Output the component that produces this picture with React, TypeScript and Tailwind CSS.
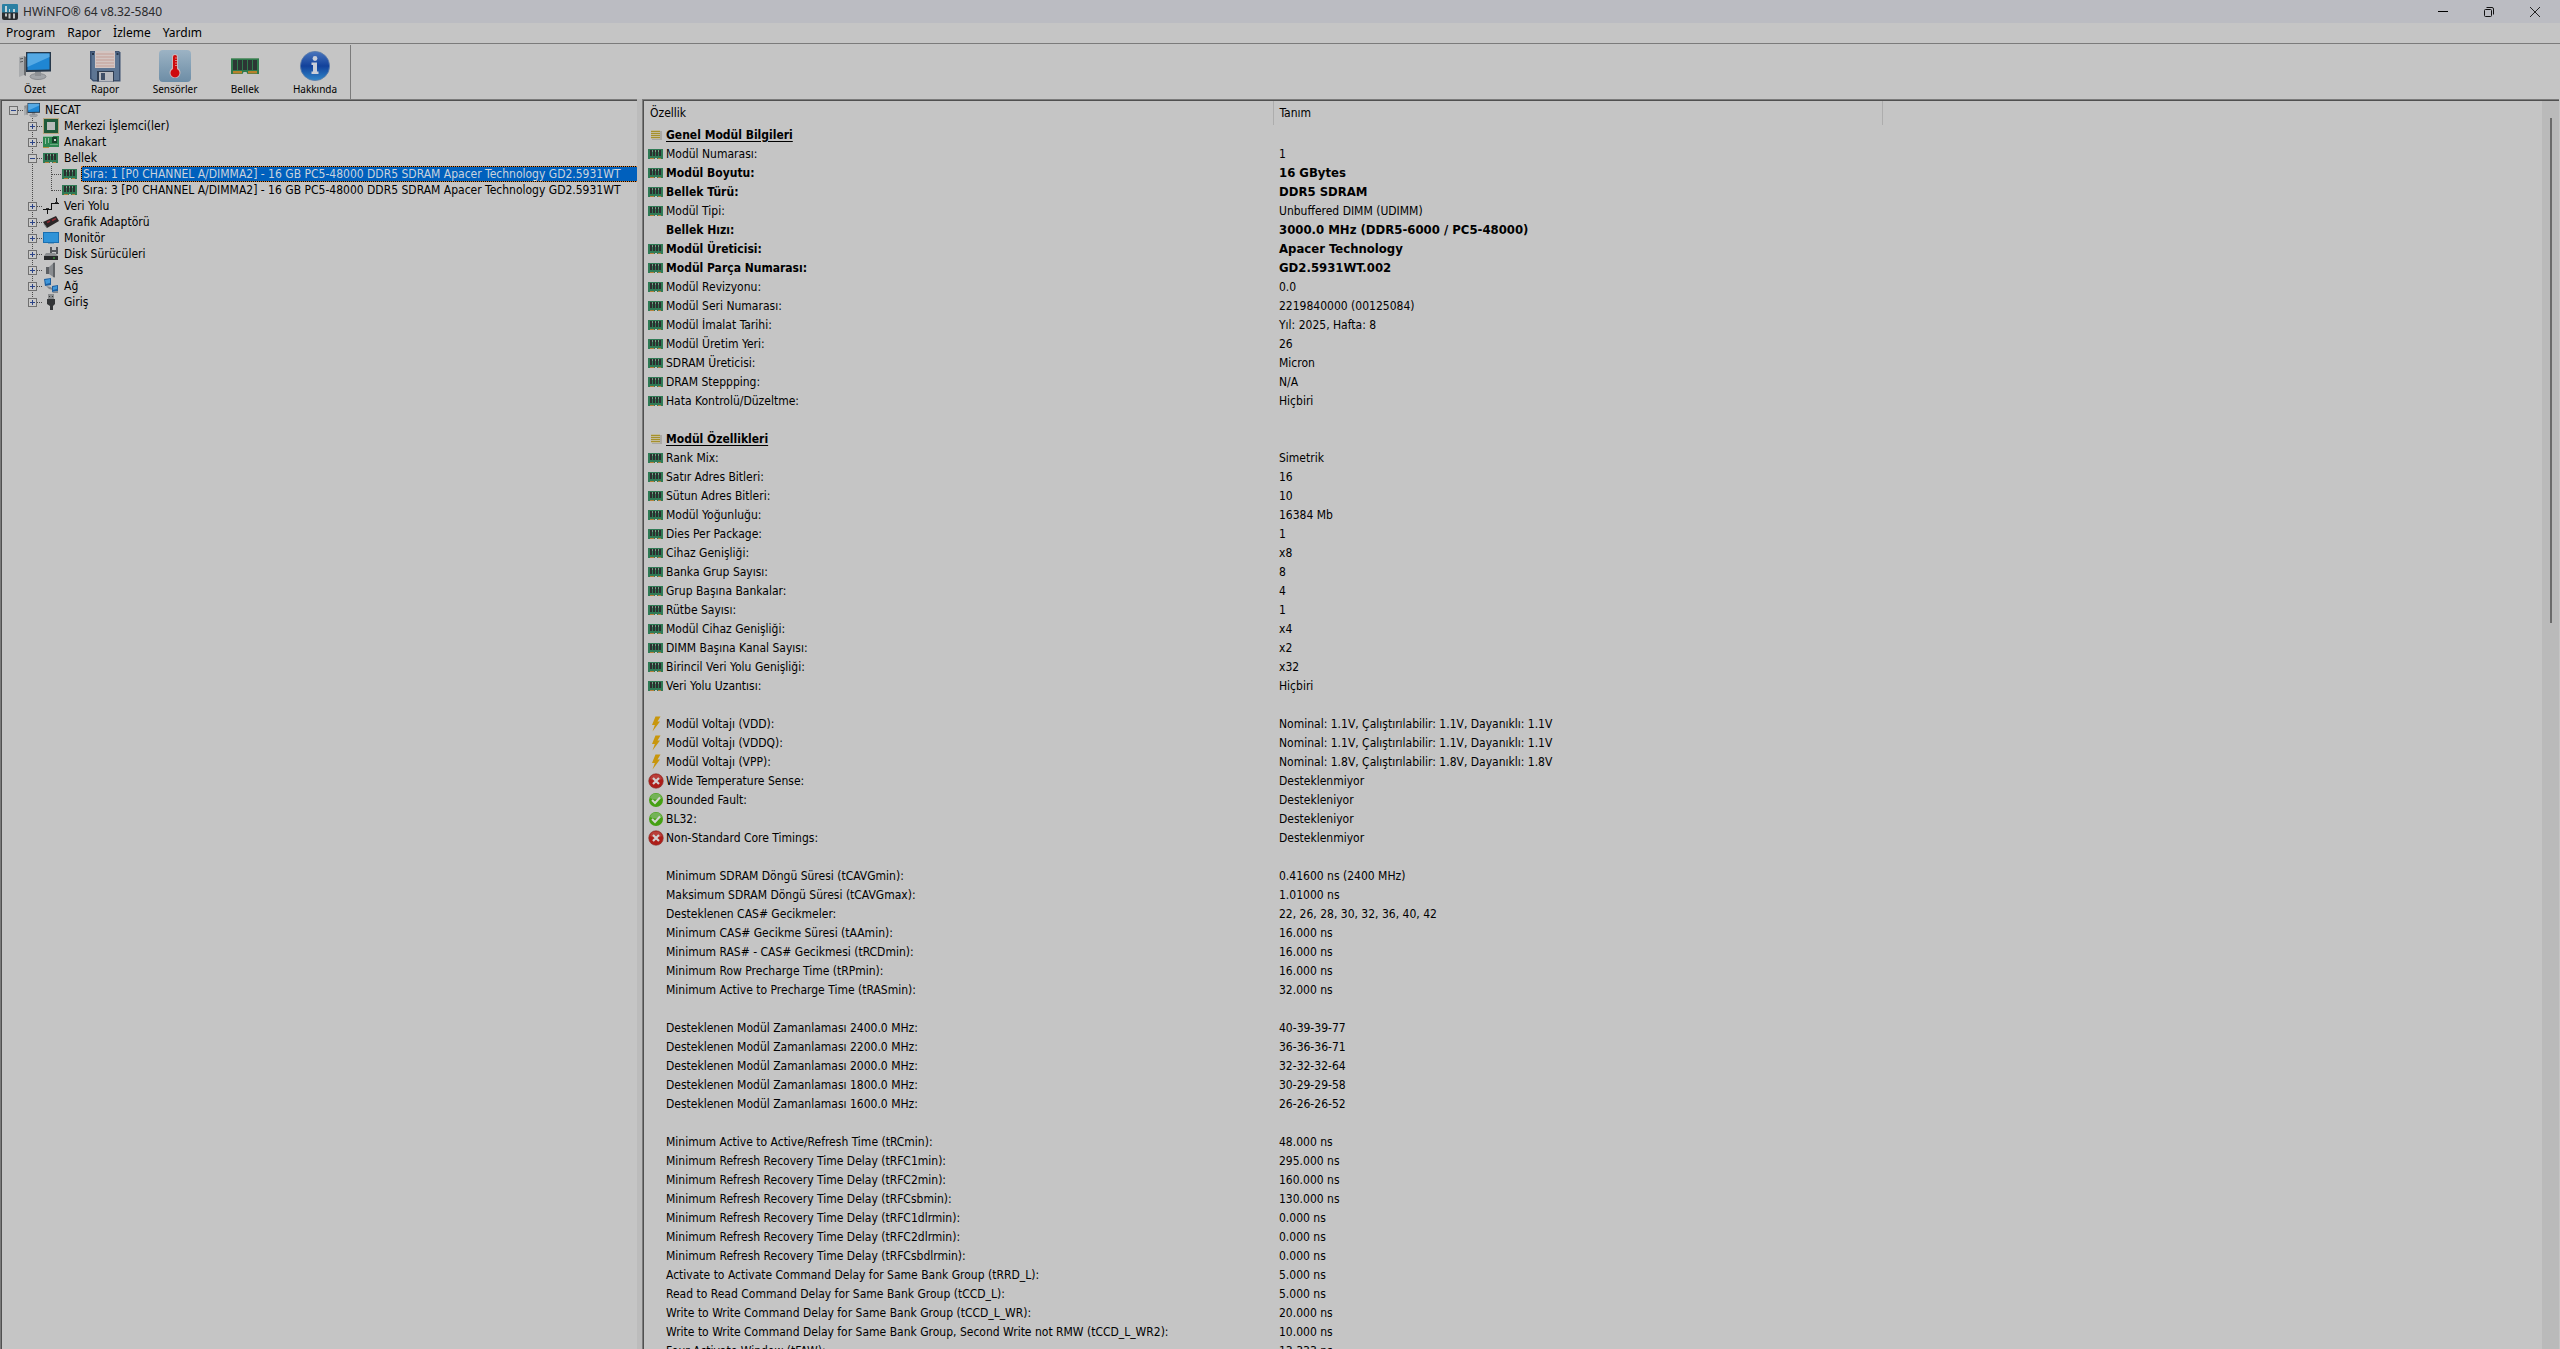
import React from "react";

type IconName = "none" | "ram" | "group" | "bolt" | "no" | "yes";

interface DetailRow {
    name?: string;
    value?: string;
    icon?: IconName;
    bold?: boolean;
    heading?: boolean;
}

const row = (icon: IconName, name: string, value: string, bold = false): DetailRow => ({ icon, name, value, bold });
const heading = (name: string): DetailRow => ({ icon: "group", name, heading: true });
const blank: DetailRow = {};

const details: DetailRow[] = [
    heading("Genel Modül Bilgileri"),
    row("ram", "Modül Numarası:", "1"),
    row("ram", "Modül Boyutu:", "16 GBytes", true),
    row("ram", "Bellek Türü:", "DDR5 SDRAM", true),
    row("ram", "Modül Tipi:", "Unbuffered DIMM (UDIMM)"),
    row("none", "Bellek Hızı:", "3000.0 MHz (DDR5-6000 / PC5-48000)", true),
    row("ram", "Modül Üreticisi:", "Apacer Technology", true),
    row("ram", "Modül Parça Numarası:", "GD2.5931WT.002", true),
    row("ram", "Modül Revizyonu:", "0.0"),
    row("ram", "Modül Seri Numarası:", "2219840000 (00125084)"),
    row("ram", "Modül İmalat Tarihi:", "Yıl: 2025, Hafta: 8"),
    row("ram", "Modül Üretim Yeri:", "26"),
    row("ram", "SDRAM Üreticisi:", "Micron"),
    row("ram", "DRAM Steppping:", "N/A"),
    row("ram", "Hata Kontrolü/Düzeltme:", "Hiçbiri"),
    blank,
    heading("Modül Özellikleri"),
    row("ram", "Rank Mix:", "Simetrik"),
    row("ram", "Satır Adres Bitleri:", "16"),
    row("ram", "Sütun Adres Bitleri:", "10"),
    row("ram", "Modül Yoğunluğu:", "16384 Mb"),
    row("ram", "Dies Per Package:", "1"),
    row("ram", "Cihaz Genişliği:", "x8"),
    row("ram", "Banka Grup Sayısı:", "8"),
    row("ram", "Grup Başına Bankalar:", "4"),
    row("ram", "Rütbe Sayısı:", "1"),
    row("ram", "Modül Cihaz Genişliği:", "x4"),
    row("ram", "DIMM Başına Kanal Sayısı:", "x2"),
    row("ram", "Birincil Veri Yolu Genişliği:", "x32"),
    row("ram", "Veri Yolu Uzantısı:", "Hiçbiri"),
    blank,
    row("bolt", "Modül Voltajı (VDD):", "Nominal: 1.1V, Çalıştırılabilir: 1.1V, Dayanıklı: 1.1V"),
    row("bolt", "Modül Voltajı (VDDQ):", "Nominal: 1.1V, Çalıştırılabilir: 1.1V, Dayanıklı: 1.1V"),
    row("bolt", "Modül Voltajı (VPP):", "Nominal: 1.8V, Çalıştırılabilir: 1.8V, Dayanıklı: 1.8V"),
    row("no", "Wide Temperature Sense:", "Desteklenmiyor"),
    row("yes", "Bounded Fault:", "Destekleniyor"),
    row("yes", "BL32:", "Destekleniyor"),
    row("no", "Non-Standard Core Timings:", "Desteklenmiyor"),
    blank,
    row("none", "Minimum SDRAM Döngü Süresi (tCAVGmin):", "0.41600 ns (2400 MHz)"),
    row("none", "Maksimum SDRAM Döngü Süresi (tCAVGmax):", "1.01000 ns"),
    row("none", "Desteklenen CAS# Gecikmeler:", "22, 26, 28, 30, 32, 36, 40, 42"),
    row("none", "Minimum CAS# Gecikme Süresi (tAAmin):", "16.000 ns"),
    row("none", "Minimum RAS# - CAS# Gecikmesi (tRCDmin):", "16.000 ns"),
    row("none", "Minimum Row Precharge Time (tRPmin):", "16.000 ns"),
    row("none", "Minimum Active to Precharge Time (tRASmin):", "32.000 ns"),
    blank,
    row("none", "Desteklenen Modül Zamanlaması 2400.0 MHz:", "40-39-39-77"),
    row("none", "Desteklenen Modül Zamanlaması 2200.0 MHz:", "36-36-36-71"),
    row("none", "Desteklenen Modül Zamanlaması 2000.0 MHz:", "32-32-32-64"),
    row("none", "Desteklenen Modül Zamanlaması 1800.0 MHz:", "30-29-29-58"),
    row("none", "Desteklenen Modül Zamanlaması 1600.0 MHz:", "26-26-26-52"),
    blank,
    row("none", "Minimum Active to Active/Refresh Time (tRCmin):", "48.000 ns"),
    row("none", "Minimum Refresh Recovery Time Delay (tRFC1min):", "295.000 ns"),
    row("none", "Minimum Refresh Recovery Time Delay (tRFC2min):", "160.000 ns"),
    row("none", "Minimum Refresh Recovery Time Delay (tRFCsbmin):", "130.000 ns"),
    row("none", "Minimum Refresh Recovery Time Delay (tRFC1dlrmin):", "0.000 ns"),
    row("none", "Minimum Refresh Recovery Time Delay (tRFC2dlrmin):", "0.000 ns"),
    row("none", "Minimum Refresh Recovery Time Delay (tRFCsbdlrmin):", "0.000 ns"),
    row("none", "Activate to Activate Command Delay for Same Bank Group (tRRD_L):", "5.000 ns"),
    row("none", "Read to Read Command Delay for Same Bank Group (tCCD_L):", "5.000 ns"),
    row("none", "Write to Write Command Delay for Same Bank Group (tCCD_L_WR):", "20.000 ns"),
    row("none", "Write to Write Command Delay for Same Bank Group, Second Write not RMW (tCCD_L_WR2):", "10.000 ns"),
    row("none", "Four Activate Window (tFAW):", "13.333 ns"),
];

const RamIcon = ({ className = "h-4 w-4" }: { className?: string }) => (
    <svg viewBox="0 0 16 16" className={className} shapeRendering="crispEdges">
        <path d="M0 3h15v10H9v-1H7v1H0z" fill="#2f7a55" />
        <path d="M2 4h2v6H2zM5 4h2v6H5zM8 4h2v6H8zM11 4h2v6h-2z" fill="#2b302f" />
        <path d="M4 4h1v2H4zM7 4h1v2H7zM10 4h1v2h-1z" fill="#6fa184" />
        <path d="M2 12h4v1H2zM10 12h3v1h-3z" fill="#b5803a" />
    </svg>
);

const PcIcon = ({ className = "h-4 w-4" }: { className?: string }) => (
    <svg viewBox="0 0 32 32" className={className}>
        <path d="M0 7l5-1v19l-5 2z" fill="#a9abad" />
        <path d="M5 6l2 1v19l-2-1z" fill="#6b6d70" />
        <path d="M1 9l3-.6M1 12l3-.6" stroke="#55585b" />
        <ellipse cx="19" cy="26.5" rx="8" ry="3" fill="#a2a5a9" stroke="#7c7f83" strokeWidth=".8" />
        <path d="M16 20h6v6h-6z" fill="#8d9094" />
        <path d="M7 2h25v19.500l-25 .5z" fill="#27384a" />
        <path d="M8.500 3.500h22V19.500l-22 .6z" fill="#1f86d3" />
        <path d="M8.500 3.500h22V7L8.500 17z" fill="#55a9e4" />
    </svg>
);

const RowIcon = ({ name }: { name: IconName }) => {
    if (name === "ram") return <RamIcon />;
    if (name === "group")
        return (
            <svg viewBox="0 0 16 16" className="h-4 w-4" shapeRendering="crispEdges">
                <path d="M4 4h10v9H4z" fill="#aaa9a6" />
                <path d="M3 3h9v9H3z" fill="#c2bb9a" />
                <path d="M3 4h9v1H3zM3 6h9v1H3zM3 8h9v1H3zM3 10h9v1H3z" fill="#a6902b" />
            </svg>
        );
    if (name === "bolt")
        return (
            <svg viewBox="0 0 16 16" className="h-4 w-4">
                <path d="M7.500.5h5L9.500 5.500H12l-7.500 10 2.300-6.500H4z" fill="#c8960c" />
            </svg>
        );
    if (name === "no")
        return (
            <svg viewBox="0 0 16 16" className="h-4 w-4">
                <circle cx="8" cy="8" r="7.300" fill="#ad1d18" stroke="#8a3a36" strokeWidth=".6" />
                <path d="M2 6a6.300 6.300 0 0 1 12 0Q8 9 2 6z" fill="#b83f3a" />
                <path d="M5 5l6 6M11 5l-6 6" stroke="#d2cfcf" strokeWidth="2.200" />
            </svg>
        );
    if (name === "yes")
        return (
            <svg viewBox="0 0 16 16" className="h-4 w-4">
                <circle cx="8" cy="8" r="7" fill="#45a012" />
                <path d="M2 6a6.300 6.300 0 0 1 12 0Q8 9 2 6z" fill="#74b356" />
                <path d="M4 8l3 3 5-5.500" fill="none" stroke="#d3d6d1" strokeWidth="2" />
            </svg>
        );
    return <span className="h-4 w-4" />;
};

const CpuIcon = () => (
    <svg viewBox="0 0 16 16" className="h-4 w-4">
        <rect x=".5" y=".5" width="15" height="15" fill="none" stroke="#a8863a" strokeDasharray="1 1" />
        <rect x="1" y="1" width="14" height="14" fill="#1f5a3a" />
        <rect x="4" y="4" width="8" height="8" fill="#b9bcba" />
    </svg>
);

const BoardIcon = () => (
    <svg viewBox="0 0 16 16" className="h-4 w-4" shapeRendering="crispEdges">
        <path d="M0 2h16v11H0z" fill="#2c8650" />
        <path d="M0 2h10v1H0zM2 4h1v6H2zM5 4h1v5H5z" fill="#8fc0a0" />
        <path d="M9 3h5v6H9z" fill="#17412a" />
        <path d="M11 5h2v2h-2z" fill="#c9d2cc" />
        <path d="M7 10h8v1H7z" fill="#6aa981" />
        <path d="M0 13h6v1H0z" fill="#b79242" />
    </svg>
);

const BusIcon = () => (
    <svg viewBox="0 0 16 16" className="h-4 w-4" shapeRendering="crispEdges">
        <path d="M0 11h8v1H0zM8 5h1v7H8zM8 5h8v1H8zM4 12h1v4H4zM13 0h1v5h-1z" fill="#111" />
        <path d="M3 10h3v1H3zM12 4h3v1h-3z" fill="#333" />
    </svg>
);

const GpuIcon = () => (
    <svg viewBox="0 0 16 16" className="h-4 w-4">
        <path d="M0 8l13-6 3 5-12 7z" fill="#2a2627" />
        <path d="M4 8.500l3-1.500M9 6.500l4-2" stroke="#8c2a33" strokeWidth="1.500" />
        <path d="M1 10l3 4" stroke="#77797b" />
    </svg>
);

const MonitorIcon = () => (
    <svg viewBox="0 0 16 16" className="h-4 w-4">
        <path d="M0 2h16v11H0z" fill="#1a6fb0" />
        <path d="M1 3h14v9H1z" fill="#2f93d8" />
        <path d="M5 13h6v1H5z" fill="#7fa2bb" />
    </svg>
);

const DiskIcon = () => (
    <svg viewBox="0 0 16 16" className="h-4 w-4">
        <path d="M7 1h8v7H7z" fill="#53565b" />
        <path d="M9 1h4v3H9zM9 6h4v2H9z" fill="#c2c4c6" />
        <path d="M3 7h9l3 3H1z" fill="#8b8d90" />
        <path d="M1 10h14v4H1z" fill="#26282a" />
        <path d="M10 11.500h2v1h-2z" fill="#45c045" />
    </svg>
);

const SpeakerIcon = () => (
    <svg viewBox="0 0 16 16" className="h-4 w-4">
        <path d="M3 5h3v7H3z" fill="#5c5f63" />
        <path d="M6 5l5-4.500v15L6 12z" fill="#898c90" />
        <path d="M10 1l2-.5v15l-2-.5z" fill="#606367" />
    </svg>
);

const NetworkIcon = () => (
    <svg viewBox="0 0 16 16" className="h-4 w-4">
        <path d="M3 8l5 1 2 3-4-1z" fill="#85888c" />
        <path d="M1 1l7-1v7l-6 1z" fill="#1d5fa0" />
        <path d="M2 2l5-1v4L3 6z" fill="#3f97da" />
        <path d="M9 8l6-1v6l-6 1z" fill="#1d5fa0" />
        <path d="M10 9l4-1v3l-4 1z" fill="#3f97da" />
        <path d="M9 14l6-1v2h-5z" fill="#85888c" />
    </svg>
);

const UsbIcon = () => (
    <svg viewBox="0 0 16 16" className="h-4 w-4">
        <path d="M5 0h6v5H5z" fill="#8b8d8f" />
        <path d="M6 2h1v1H6zM9 2h1v1H9z" fill="#37393a" />
        <path d="M4 5h8v5l-2 2v4H7v-4l-3-2z" fill="#333537" />
    </svg>
);

const FloppyIcon = () => (
    <svg viewBox="0 0 32 32" className="h-8 w-8">
        <path d="M1 1h29l1.500 1.500V31.500H4L1 28.500z" fill="#3c5170" />
        <path d="M2.500 2.500H30V30H4.500l-2-2z" fill="#5d7593" />
        <rect x="6" y="1" width="20" height="17" fill="#d3c5c2" />
        <path d="M7 4h18M7 7h18M7 10h18M7 13h18M7 16h18" stroke="#c39d95" />
        <path d="M8 21h17v10.500H8z" fill="#2f3d52" />
        <path d="M10 22h14v9.500H10z" fill="#b9bbc1" />
        <rect x="12" y="23" width="4" height="7" fill="#3f4f68" />
        <path d="M3 3h2v2H3zM27.500 3h2v2h-2z" fill="#25344a" />
    </svg>
);

const SensorIcon = () => (
    <svg viewBox="0 0 32 32" className="h-8 w-8">
        <defs>
            <linearGradient id="sensor" x1="0" y1="0" x2="0" y2="1">
                <stop offset="0" stopColor="#9cb3c4" />
                <stop offset="1" stopColor="#6d8da6" />
            </linearGradient>
        </defs>
        <rect width="32" height="32" rx="4" fill="url(#sensor)" />
        <path d="M13 7a3 3 0 0 1 6 0v11a5.500 5.500 0 1 1-6 0z" fill="#cbb9bc" />
        <path d="M14 7a2 2 0 0 1 4 0v12a4.500 4.500 0 1 1-4 0z" fill="#cf0a0c" />
        <path d="M16 8h2M16 10.500h2M16 13h2M16 15.500h2" stroke="#d9a5a5" strokeWidth=".8" />
    </svg>
);

const RamBigIcon = () => (
    <svg viewBox="0 0 32 32" className="h-8 w-8">
        <path d="M2 8h28v16H18.500l-1-2h-3l-1 2H2z" fill="#2f7a4c" />
        <path d="M4 10h4v10H4zM9 10h4v10H9zM14 10h4v10h-4zM19 10h4v10h-4zM24 10h4v10h-4z" fill="#2c3634" />
        <path d="M2 8.500h28" stroke="#63936f" />
        <path d="M4 21h9v2.500H4zM19 21h9v2.500h-9z" fill="#b7812b" />
    </svg>
);

const InfoIcon = () => (
    <svg viewBox="0 0 32 32" className="h-8 w-8">
        <defs>
            <linearGradient id="info" x1="0" y1="0" x2="0" y2="1">
                <stop offset="0" stopColor="#4a76bd" />
                <stop offset=".5" stopColor="#12419b" />
                <stop offset="1" stopColor="#2f86c9" />
            </linearGradient>
        </defs>
        <circle cx="16" cy="16" r="14.600" fill="url(#info)" stroke="#5b7ba8" strokeWidth=".8" />
        <circle cx="16" cy="8.500" r="2.400" fill="#c9ced8" />
        <path d="M12.500 12.500h5.500v9h1.500v2.500h-7v-2.500H14V15h-1.500z" fill="#c9ced8" />
    </svg>
);

const AppIcon = () => (
    <svg viewBox="0 0 16 16" className="h-4 w-4">
        <rect width="16" height="9" rx="1" fill="#2b7fa3" />
        <path d="M0 8.500h16V14a2 2 0 0 1-2 2H2a2 2 0 0 1-2-2z" fill="#2a2c30" />
        <path d="M3 2h2v6H3zM7 5h1v3H7zM11 5h2v3h-2z" fill="#c3d3da" />
        <path d="M3 9.500h2v3H3zM6.500 9.500h2v5h-2zM11 9.500h2v5h-2z" fill="#c0c2c4" />
    </svg>
);

interface TreeItem {
    label: string;
    level: number;
    icon: React.ReactNode;
    open?: boolean;
    last?: boolean;
    selected?: boolean;
}

const tree: TreeItem[] = [
    { label: "NECAT", level: 0, icon: <PcIcon />, open: true },
    { label: "Merkezi İşlemci(ler)", level: 1, icon: <CpuIcon />, open: false },
    { label: "Anakart", level: 1, icon: <BoardIcon />, open: false },
    { label: "Bellek", level: 1, icon: <RamIcon />, open: true },
    {
        label: "Sıra: 1 [P0 CHANNEL A/DIMMA2] - 16 GB PC5-48000 DDR5 SDRAM Apacer Technology GD2.5931WT",
        level: 2,
        icon: <RamIcon />,
        selected: true,
    },
    {
        label: "Sıra: 3 [P0 CHANNEL A/DIMMA2] - 16 GB PC5-48000 DDR5 SDRAM Apacer Technology GD2.5931WT",
        level: 2,
        icon: <RamIcon />,
        last: true,
    },
    { label: "Veri Yolu", level: 1, icon: <BusIcon />, open: false },
    { label: "Grafik Adaptörü", level: 1, icon: <GpuIcon />, open: false },
    { label: "Monitör", level: 1, icon: <MonitorIcon />, open: false },
    { label: "Disk Sürücüleri", level: 1, icon: <DiskIcon />, open: false },
    { label: "Ses", level: 1, icon: <SpeakerIcon />, open: false },
    { label: "Ağ", level: 1, icon: <NetworkIcon />, open: false },
    { label: "Giriş", level: 1, icon: <UsbIcon />, open: false, last: true },
];

// Connector lines and the +/- box in front of a node
const Branch = ({ item }: { item: TreeItem }) => (
    <svg viewBox="0 0 20 16" className="h-4 w-5" shapeRendering="crispEdges">
        {item.level > 0 && (
            <path d={item.last ? "M9.500 0V9" : "M9.500 0V16"} stroke="#4a4a4a" strokeDasharray="1 1" />
        )}
        <path d="M10 8.500H20" stroke="#4a4a4a" strokeDasharray="1 1" />
        {item.open !== undefined && (
            <>
                <rect x="5.500" y="4.500" width="8" height="8" fill="#cacaca" stroke="#707070" />
                <path d={item.open ? "M7 8.500h5" : "M7 8.500h5M9.500 6v5"} stroke="#2b4488" />
            </>
        )}
    </svg>
);

const TreeRow = ({ item }: { item: TreeItem }) => (
    <li role="treeitem" aria-selected={!!item.selected} className="flex h-4 items-center">
        {item.level > 0 && (
            <span className="w-[19px] shrink-0">
                {item.level > 1 && (
                    <svg viewBox="0 0 19 16" className="ml-[19px] h-4 w-[19px]" shapeRendering="crispEdges">
                        <path d="M9.500 0V16" stroke="#4a4a4a" strokeDasharray="1 1" />
                    </svg>
                )}
            </span>
        )}
        {item.level > 1 && <span className="w-[19px] shrink-0" />}
        {item.open !== undefined ? (
            <button type="button" aria-label={item.label} aria-expanded={item.open} className="shrink-0">
                <Branch item={item} />
            </button>
        ) : (
            <span className="shrink-0">
                <Branch item={item} />
            </span>
        )}
        <span className="shrink-0">{item.icon}</span>
        {item.selected ? (
            <button
                type="button"
                className="ml-[3px] flex-1 border border-r-0 border-dotted border-[#d9812f] bg-black text-left text-[#c9d3de]"
            >
                <span className="block h-[14px] bg-[#0060bd] px-px leading-[14px]">{item.label}</span>
            </button>
        ) : (
            <button type="button" className="ml-[3px] shrink-0 px-[2px] leading-4">
                {item.label}
            </button>
        )}
    </li>
);

const tools = [
    { label: "Özet", icon: <PcIcon className="h-8 w-8" /> },
    { label: "Rapor", icon: <FloppyIcon /> },
    { label: "Sensörler", icon: <SensorIcon /> },
    { label: "Bellek", icon: <RamBigIcon /> },
    { label: "Hakkında", icon: <InfoIcon /> },
];

const TitleBar = () => (
    <header className="flex h-[23px] shrink-0 items-center bg-[#bbbcc2] px-[2px]">
        <AppIcon />
        <h1 className="ml-[5px] flex-1 text-[12px] leading-4 text-[#2a2a2c]">HWiNFO® 64 v8.32-5840</h1>
        <button type="button" aria-label="Simge durumuna küçült" className="flex w-[46px] justify-center">
            <svg viewBox="0 0 12 12" className="h-3 w-3" shapeRendering="crispEdges">
                <path d="M1 5.500h10" stroke="#000" />
            </svg>
        </button>
        <button type="button" aria-label="Geri yükle" className="flex w-[46px] justify-center">
            <svg viewBox="0 0 12 12" className="h-3 w-3" fill="none" stroke="#111">
                <rect x="1.500" y="3.500" width="7" height="7" rx="1" />
                <path d="M3.500 1.500H9a1.500 1.500 0 0 1 1.500 1.500v5.500" />
            </svg>
        </button>
        <button type="button" aria-label="Kapat" className="flex w-[46px] justify-center">
            <svg viewBox="0 0 12 12" className="h-3 w-3" stroke="#222">
                <path d="M1 1l10 10M11 1L1 11" />
            </svg>
        </button>
    </header>
);

export default function App() {
    return (
        <div className="flex h-screen flex-col overflow-hidden bg-[#c5c5c5] font-['Noto_Sans','Open_Sans',sans-serif] text-black">
            <TitleBar />

            <nav className="flex h-[21px] shrink-0 border-b border-[#7b7b7b] text-[12px] leading-[18px]">
                {["Program", "Rapor", "İzleme", "Yardım"].map((item) => (
                    <button key={item} type="button" className="px-[6px]">
                        {item}
                    </button>
                ))}
            </nav>

            <div className="flex h-[55px] shrink-0 pt-px">
                <div className="flex border-r border-[#7b7b7b]">
                    {tools.map((tool) => (
                        <button key={tool.label} type="button" className="flex w-[70px] flex-col items-center pt-[5px]">
                            {tool.icon}
                            <span className="text-[10px] leading-[14px]">{tool.label}</span>
                        </button>
                    ))}
                </div>
            </div>

            <div className="flex min-h-0 flex-1 font-['DejaVu_Sans_Condensed','Noto_Sans',sans-serif] text-[12px]">
                <aside className="w-1/4 shrink-0 bg-[#bcbcbc] pr-[3px]">
                    <div className="h-full border-l border-t border-[#7b7b7b] bg-[#c5c5c5]">
                        <ul
                            role="tree"
                            className="h-full overflow-hidden whitespace-nowrap border-l border-t border-[#505050] pl-[2px] pt-px"
                        >
                            {tree.map((item) => (
                                <TreeRow key={item.label} item={item} />
                            ))}
                        </ul>
                    </div>
                </aside>

                <main className="flex min-w-0 flex-1 border-l-2 border-[#bcbcbc] pr-px">
                    <div className="flex min-w-0 flex-1 border-l border-t border-[#7b7b7b]">
                        <div className="flex min-w-0 flex-1 border-l border-t border-[#505050]">
                            <div className="min-w-0 flex-1 overflow-hidden">
                                <table className="w-full table-fixed whitespace-nowrap">
                                    <thead>
                                        <tr className="h-6 text-left">
                                            <th className="w-[629px] border-r border-[#adadad] pl-[6px] font-normal">Özellik</th>
                                            <th className="w-[609px] border-r border-[#adadad] pl-[6px] font-normal">Tanım</th>
                                            <th />
                                        </tr>
                                    </thead>
                                    <tbody>
                                        {details.map((item, i) => (
                                            <tr key={i} className={item.bold ? "h-[19px] font-bold" : "h-[19px]"}>
                                                <td className="p-0">
                                                    <div className="flex h-[19px] items-center pl-1">
                                                        {item.icon && <RowIcon name={item.icon} />}
                                                        <span
                                                            className={
                                                                item.heading
                                                                    ? "ml-[2px] font-bold leading-4 underline underline-offset-2"
                                                                    : "ml-[2px] leading-4"
                                                            }
                                                        >
                                                            {item.name}
                                                        </span>
                                                    </div>
                                                </td>
                                                <td className={item.bold ? "p-0 pl-[6px] text-[13px] leading-4" : "p-0 pl-[6px] leading-4"}>
                                                    {item.value}
                                                </td>
                                                <td className="p-0" />
                                            </tr>
                                        ))}
                                    </tbody>
                                </table>
                            </div>
                            <div className="flex w-[17px] shrink-0 justify-center bg-[#bababa] pt-[17px]">
                                <div className="h-[41%] w-[2px] bg-[#6b6b6b]" />
                            </div>
                        </div>
                    </div>
                </main>
            </div>
        </div>
    );
}
